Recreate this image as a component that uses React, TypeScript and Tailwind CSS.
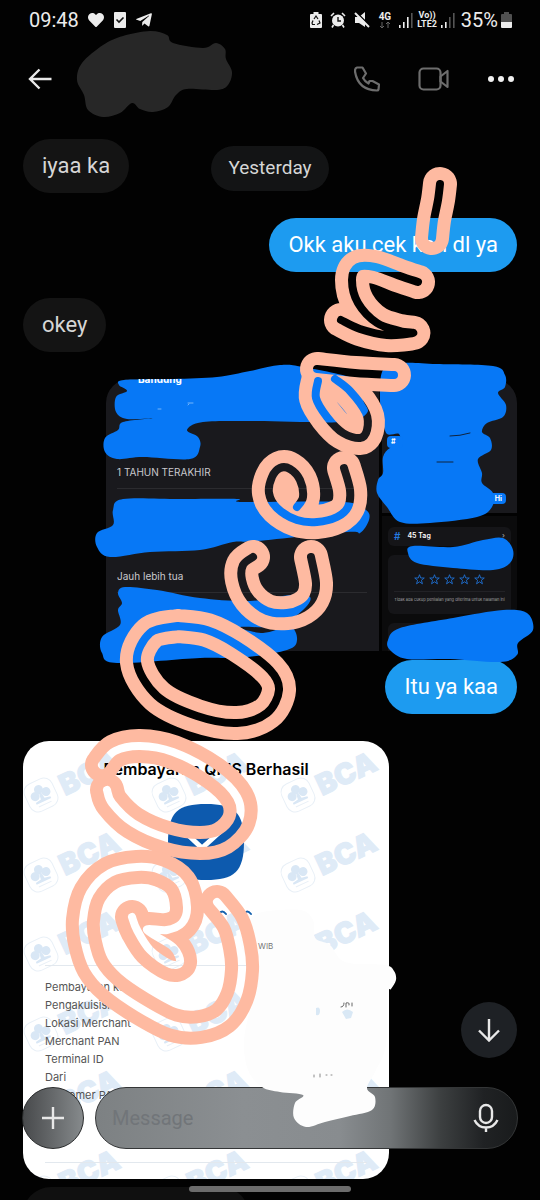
import type { ReactNode } from "react";
import { FaHeart, FaTelegramPlane } from "react-icons/fa";

type Point = [number, number];

// Catmull-Rom spline through the points, written as cubic curves
function smooth(src: string, closed = false) {
  const pts = src.split(" ").map((p) => p.split(",").map(Number) as Point);
  const n = pts.length;
  const at = (i: number) =>
    closed ? pts[(i + n) % n] : pts[Math.max(0, Math.min(n - 1, i))];
  let d = `M${pts[0][0]} ${pts[0][1]}`;
  for (let i = 0; i < (closed ? n : n - 1); i++) {
    const [a, b, c, e] = [at(i - 1), at(i), at(i + 1), at(i + 2)];
    d += `C${b[0] + (c[0] - a[0]) / 6} ${b[1] + (c[1] - a[1]) / 6} ${
      c[0] - (e[0] - b[0]) / 6
    } ${c[1] - (e[1] - b[1]) / 6} ${c[0]} ${c[1]}`;
  }
  return closed ? d + "Z" : d;
}

const BLUE_SCRIBBLES = [
  "119,385 124,380 173,379 217,377 250,371 280,365 303,367 357,380 363,400 367,413 343,422 257,421 203,422 187,430 198,437 200,447 190,459 143,457 117,459 105,452 105,438 118,430 123,422 153,418 127,419 116,412 116,397 127,391",
  "113,510 123,499 180,499 237,499 243,502 343,502 366,510 369,520 360,533 347,532 257,541 233,542 200,550 150,552 110,557 97,547 97,533 113,525",
  "118,593 125,587 157,590 200,598 250,601 290,595 310,597 303,610 277,626 240,627 263,633 290,627 297,640 287,650 240,658 200,658 117,663 102,653 102,637 120,625 118,610 122,603",
  "383,370 403,363 437,364 493,366 505,375 505,387 498,393 506,405 503,417 487,423 482,432 490,438 491,450 478,459 482,473 482,483 493,493 492,507 477,517 430,523 400,522 387,507 377,493 378,480 383,473 383,457 390,448 400,446 399,434 387,434 383,420 380,400",
  "408,553 413,546 453,547 483,540 503,538 513,550 510,563 493,570 453,568 417,563",
  "388,640 400,628 453,618 503,610 527,613 533,630 518,643 517,655 500,662 450,659 407,659 390,650",
];

const GREY_SCRIBBLE =
  "77,80 82,63 103,45 123,36 150,31 167,35 173,43 203,48 216,43 225,49 226,59 232,72 228,85 217,90 187,89 176,95 168,107 153,112 140,109 132,103 120,113 103,117 88,110 84,95";

const WHITE_SCRIBBLE =
  "262,912 300,910 313,920 315,938 330,945 345,962 385,965 394,971 396,980 391,989 387,994 386,1045 375,1072 367,1088 375,1097 372,1110 350,1116 325,1122 306,1127 294,1118 295,1103 303,1095 280,1092 262,1087 248,1070 244,1040 252,1000 256,970 245,955 240,935 250,920";

const MARKER_STROKES = [
  "440,184 438,200 434,220 432,238",
  "418,282 400,276 375,267 358,267 352,280 358,303 377,323 400,331 413,333 387,335 360,329 341,320",
  "317,369 355,373 394,375",
  "318,381 316,398 327,417 343,433 360,438 367,430 366,413 350,391 335,379",
  "297,507 303,497 300,480 290,469 280,468 272,477 269,493 277,508 297,520 317,522 337,517 348,507 350,490 344,468",
  "253,557 243,565 242,580 250,598 267,611 287,613 303,608 313,598 316,583 311,557",
  "178,626 150,633 137,662 157,696 197,716 237,723 267,713 279,690 270,670 237,645 207,630 178,626",
  "102,765 115,751 140,746 173,752 213,773 237,797 239,820 223,838 200,843 167,838 133,823 112,803 107,790",
  "132,917 137,930 150,950 170,964 180,962 173,947 147,930 167,930 182,923 187,907 180,883 160,870 137,867 110,873 90,893 83,920 85,943 93,967 110,987 140,1008 173,1025 200,1027 223,1018 237,997 242,970 240,947 233,923 217,902",
];

function Scribbles() {
  const strokes = MARKER_STROKES.map((s) => smooth(s));
  return (
    <svg
      className="pointer-events-none absolute inset-x-0 top-0 z-20 w-full"
      viewBox="0 0 540 1200"
      aria-hidden="true"
    >
      <defs>
        <mask id="hollow" maskUnits="userSpaceOnUse" x="0" y="0" width="540" height="1200">
          <rect width="540" height="1200" fill="white" />
          {strokes.map((d) => (
            <path key={d} d={d} fill="none" stroke="black" strokeWidth="8" strokeLinecap="round" strokeLinejoin="round" />
          ))}
        </mask>
      </defs>
      <path d={smooth(GREY_SCRIBBLE, true)} fill="#272727" />
      <g fill="#0778f6">
        {BLUE_SCRIBBLES.map((s) => (
          <path key={s} d={smooth(s, true)} />
        ))}
      </g>
      <path d={smooth(WHITE_SCRIBBLE, true)} fill="#fdfdfd" />
      <g fill="none" strokeLinecap="round">
        <path d="M450 436q10 0 20-3M437 462h16" stroke="#10243f" />
        <path d="M188 403h5M189 404l-1 1M158 409h3" stroke="#75b5fb" />
        <path d="M219 914q3-5 7 0M244 914q3-5 7 0" stroke="#1460ad" strokeWidth="2" />
        <path d="M341 1007q3 0 3-4M346 1007v-4q4-1 3 2M352 1003v3" stroke="#666" />
        <path d="M314 1075v2M320 1074v3M326 1075h1M331 1075h1" stroke="#888" />
      </g>
      <path d="M342 1012q5-5 11 0l-2 6-5 1zM316 1008q4-2 4 3t-4 4z" fill="#d9e8f5" />
      <g
        fill="none"
        stroke="#febaa1"
        strokeWidth="34"
        strokeLinecap="round"
        strokeLinejoin="round"
        mask="url(#hollow)"
      >
        {strokes.map((d) => (
          <path key={d} d={d} />
        ))}
      </g>
    </svg>
  );
}

function Signal({ active }: { active: number }) {
  return (
    <svg className="h-4 w-[14px]" viewBox="0 0 14 16" aria-hidden="true">
      {[3, 6, 11, 15].map((h, i) => (
        <rect key={h} x={i * 4} y={16 - h} width="1.6" height={h} fill={i < active ? "#eee" : "#555"} />
      ))}
    </svg>
  );
}

function StatusBar() {
  return (
    <div className="flex h-10 shrink-0 items-center justify-between pr-7 pl-[29px] text-[#ececec]">
      <div className="flex items-center gap-[9px]">
        <span className="text-[20px] leading-6">09:48</span>
        <FaHeart className="h-4 w-4" />
        <svg className="ml-px h-4 w-3" viewBox="0 0 12 16" aria-hidden="true">
          <rect width="12" height="16" rx="1" fill="currentColor" />
          <path d="M2.500 7.500l2.500 2.500 4.500-4.500" fill="none" stroke="#111" strokeWidth="1.600" />
        </svg>
        <FaTelegramPlane className="h-[18px] w-[18px]" />
      </div>
      <div className="flex items-center">
        <svg className="h-4 w-3" viewBox="0 0 12 16" aria-hidden="true">
          <path d="M3.500 0h5v2H11q1 0 1 1v12q0 1-1 1H1q-1 0-1-1V3q0-1 1-1h2.500z" fill="currentColor" />
          <path d="M4 7l2-3 2 3M9 8.500l1 2.500-3 1.500M5 12.500H2.500L2 11l1-2.500" fill="none" stroke="#111" strokeWidth="1.200" />
        </svg>
        <svg className="ml-2 h-4 w-4" viewBox="0 0 16 16" aria-hidden="true">
          <circle cx="8" cy="8.500" r="6" fill="currentColor" />
          <path d="M1 4l3-3M15 4l-3-3M3.500 13L2 15.500M12.500 13l1.500 2.500" stroke="currentColor" strokeWidth="1.600" />
          <path d="M8 5v4h3" fill="none" stroke="#111" strokeWidth="1.400" />
        </svg>
        <svg className="ml-2 h-4 w-4" viewBox="0 0 16 16" aria-hidden="true">
          <path d="M1 5h4l6-5v15L5 11H1z" fill="currentColor" />
          <path d="M2 0l14 14" stroke="#020202" strokeWidth="1.600" />
          <path d="M1 1l14 14" stroke="currentColor" strokeWidth="2" />
        </svg>
        <span className="ml-[9px] flex flex-col items-center text-[10px] leading-[9px] font-bold">
          4G
          <svg className="h-2 w-3" viewBox="0 0 12 8" fill="none" stroke="#666" aria-hidden="true">
            <path d="M3 1v6M1 5l2 2 2-2M9 7V1M7 3l2-2 2 2" />
          </svg>
        </span>
        <span className="ml-2 flex">
          <Signal active={3} />
        </span>
        <span className="ml-1 flex flex-col items-center text-[9px] leading-[9px] font-bold">
          <span>Vo))</span>
          <span>LTE2</span>
        </span>
        <span className="ml-1 flex">
          <Signal active={2} />
        </span>
        <span className="ml-[6px] text-[20px] leading-6">35%</span>
        <svg className="ml-[3px] h-4 w-[11px]" viewBox="0 0 11 16" aria-hidden="true">
          <path d="M3 0h5v2h2q1 0 1 1v7H0V3q0-1 1-1h2z" fill="#505050" />
          <path d="M0 10h11v5q0 1-1 1H1q-1 0-1-1z" fill="currentColor" />
        </svg>
      </div>
    </div>
  );
}

function Header() {
  return (
    <header className="flex h-[78px] shrink-0 items-center justify-between pr-[26px] pl-7">
      <button type="button" aria-label="Back" className="text-[#e8e8e8]">
        <svg className="h-6 w-6" viewBox="0 0 24 24" fill="none" stroke="currentColor" strokeWidth="2.400">
          <path d="M23.500 12H2M11.500 2.500L2 12l9.500 9.500" />
        </svg>
      </button>
      <div className="flex items-center text-[#6d6d6d]">
        <button type="button" aria-label="Call">
          <svg className="h-[26px] w-[26px]" viewBox="0 0 26 26" fill="none" stroke="currentColor" strokeWidth="2.200" strokeLinejoin="round">
            <path d="M3 1.500h5.500l3.500 6-3 4.500q2 3.800 5.500 5.500l1-2.500h3l6.500 3.500-.5 5q-.2 1-1.500 1Q4 24 1 5.500q-.2-3.500 2-4z" />
          </svg>
        </button>
        <button type="button" aria-label="Video call" className="ml-[38px]">
          <svg className="h-6 w-[31px]" viewBox="0 0 31 24" fill="none" stroke="currentColor" strokeWidth="2.200" strokeLinejoin="round">
            <rect x="1.500" y="1.500" width="21" height="21" rx="4" />
            <path d="M22.500 9.500l7-5.500v16l-7-5.500z" />
          </svg>
        </button>
        <button type="button" aria-label="More" className="ml-[39px] text-[#f0f0f0]">
          <svg className="h-6 w-[26px]" viewBox="0 0 26 24" fill="currentColor">
            <circle cx="3" cy="12" r="3" />
            <circle cx="13" cy="12" r="3" />
            <circle cx="23" cy="12" r="3" />
          </svg>
        </button>
      </div>
    </header>
  );
}

function Bubble({ mine, children }: { mine?: boolean; children: ReactNode }) {
  return (
    <p
      className={`flex h-[54px] w-fit items-center rounded-full px-[19px] text-[22px] leading-6 ${
        mine ? "ml-auto bg-[#1d9bf0] text-white" : "bg-[#141414] text-[#d6d6d6]"
      }`}
    >
      {children}
    </p>
  );
}

function MediaGrid() {
  return (
    <div className="mt-[27px] ml-auto grid h-[272px] w-[411px] shrink-0 grid-cols-[273px_1fr] gap-[3px] overflow-hidden rounded-t-3xl font-['Inter',sans-serif]">
      <div className="relative rounded-bl-lg bg-[#19191d] pt-[85px] pr-3 pl-[11px] text-[10px] leading-4 text-[#c9c9cd]">
        <p className="absolute -top-2 left-8 z-30 text-[10px] font-bold text-white">Bandung</p>
        <p className="border-b border-[#2b2b2f] pb-2">1 TAHUN TERAKHIR</p>
        <p className="mt-[79px] border-b border-[#2b2b2f] pb-2">Jauh lebih tua</p>
      </div>
      <div className="grid grid-rows-[134px_1fr] gap-[3px]">
        <div className="flex flex-col justify-between bg-[#19191d] pt-[57px] pr-[11px] pb-[9px] pl-[5px] text-[7px] font-bold text-white">
          <span className="relative z-30 w-4 rounded bg-[#0778f6] px-1 leading-3">#</span>
          <span className="ml-auto rounded bg-[#0778f6] pr-1 pl-8 leading-[11px]">ia Hi</span>
        </div>
        <div className="overflow-hidden bg-[#0b0b0c] px-[6px] pt-[11px]">
          <div className="flex h-[19px] items-center rounded-md bg-[#151518] px-[6px] text-[7px] font-semibold text-white">
            <span className="text-[10px] text-[#247be0]">#</span>
            <span className="ml-[7px]">45 Tag</span>
            <span className="ml-auto text-[#999]">›</span>
          </div>
          <div className="mt-[9px] h-[59px] rounded-md bg-[#151518] px-[6px] pt-[19px]">
            <div className="flex justify-center gap-1">
              {[1, 2, 3, 4, 5].map((n) => (
                <svg key={n} className="h-[11px] w-[11px]" viewBox="0 0 12 12" fill="none" stroke="#1f6fd0" aria-hidden="true">
                  <path d="M6 .8l1.300 3.500 3.900.1-3.100 2.400 1.100 3.900L6 8.500l-3.200 2.200 1.100-3.900L.8 4.400l3.900-.1z" />
                </svg>
              ))}
            </div>
            <p className="mt-[6px] border-t border-[#222226] pt-[5px] text-center text-[4px] leading-[5px] text-[#a0a0a0]">
              Tidak ada cukup penilaian yang diterima untuk halaman ini
            </p>
          </div>
          <div className="mt-[9px] h-10 rounded-md bg-[#151518]" />
        </div>
      </div>
    </div>
  );
}

function Watermark() {
  return (
    <svg className="absolute top-0 left-0 h-[438px] w-[365px]" viewBox="23 741 365 438" aria-hidden="true">
      <defs>
        <g id="stamp">
          <g transform="rotate(-25)" fill="none" stroke="#e9f0f7">
            <rect x="-15" y="-15" width="30" height="30" rx="9" />
            <g fill="#d9e7f5" stroke="none">
              <circle cx="0" cy="-6" r="4.500" />
              <circle cx="-6" cy="-1" r="4.500" />
              <circle cx="6" cy="-1" r="4.500" />
              <path d="M-1-3h2l1 7 6 1v2h-16v-2l6-1z" />
            </g>
            <path d="M-7 10h14" />
          </g>
          <text
            transform="translate(24 1) rotate(-25)"
            fontFamily="Inter, sans-serif"
            fontSize="29"
            fontWeight="900"
            fill="#dfebf7"
            stroke="#dfebf7"
            strokeWidth="1"
          >
            BCA
          </text>
        </g>
      </defs>
      {[795, 875, 954, 1034, 1113, 1193].map((y) =>
        [41, 169, 298].map((x) => <use key={`${x}-${y}`} href="#stamp" x={x} y={y} />)
      )}
    </svg>
  );
}

const RECEIPT_FIELDS = [
  "Pembayaran ke",
  "Pengakuisisi",
  "Lokasi Merchant",
  "Merchant PAN",
  "Terminal ID",
  "Dari",
  "Customer PAN",
];

function Receipt() {
  return (
    <article className="relative mt-[27px] h-[438px] w-[366px] shrink-0 overflow-hidden rounded-[26px] bg-white px-[22px] pt-[18px] font-['Inter',sans-serif]">
      <Watermark />
      <div className="relative">
        <h2 className="text-center text-[16px] leading-5 font-semibold text-black">Pembayaran QRIS Berhasil</h2>
        <svg className="mx-auto mt-[25px] h-[76px] w-[76px]" viewBox="0 0 76 76" aria-hidden="true">
          <path d="M38 0C66 0 76 8 76 38S66 76 38 76 0 68 0 38 10 0 38 0z" fill="#0d5aae" />
          <path d="M19 30l15 14 20-18" fill="none" stroke="white" strokeWidth="5" />
        </svg>
      </div>
      <p className="relative z-30 mt-[58px] ml-[213px] text-[8px] leading-4 text-[#777]">WIB</p>
      <div className="relative">
        <ul className="mt-[11px] border-t border-[#e2e8ee] pt-3 text-[11px] leading-[18px] text-[#555]">
          {RECEIPT_FIELDS.map((field) => (
            <li key={field}>{field}</li>
          ))}
        </ul>
        <hr className="mt-[58px] border-[#e2e8ee]" />
      </div>
    </article>
  );
}

function Composer() {
  return (
    <form className="absolute inset-x-0 bottom-[51px] z-10 flex gap-[11px] px-[22px]">
      <button
        type="button"
        aria-label="Add attachment"
        className="flex h-[62px] w-[62px] shrink-0 items-center justify-center rounded-full border border-[#292b2c] bg-linear-to-r from-[#484a4c] to-[#868a8c] text-[#e8e8e8]"
      >
        <svg className="h-6 w-6" viewBox="0 0 24 24" stroke="currentColor" strokeWidth="2.400">
          <path d="M12 1v22M1 12h22" />
        </svg>
      </button>
      <div className="flex h-[62px] grow items-center rounded-full border border-[#343637] bg-[linear-gradient(90deg,#7d8183_0%,#8b8f92_35%,#888c8f_58%,#707476_70%,#3c3f40_82%,#202224_92%,#191b1c_100%)] pr-[18px] pl-4">
        <input
          type="text"
          aria-label="Message"
          placeholder="Message"
          className="min-w-0 grow bg-transparent text-[20px] leading-6 text-white outline-none placeholder:text-[#717579]"
        />
        <button type="button" aria-label="Record voice message" className="text-[#e8e8e8]">
          <svg className="h-[30px] w-[26px]" viewBox="0 0 26 30" fill="none" stroke="currentColor" strokeWidth="2.400">
            <rect x="7" y="2" width="12" height="18" rx="6" />
            <path d="M1.500 17Q5 24.500 13 24.500T24.500 17M13 24v5" />
          </svg>
        </button>
      </div>
    </form>
  );
}

export default function App() {
  return (
    <div className="relative flex h-screen flex-col overflow-hidden bg-[#020202] font-['Roboto',sans-serif]">
      <StatusBar />
      <Header />
      <main className="flex min-h-0 grow flex-col px-[23px] pt-[21px]">
        <div className="grid grid-cols-[1fr_auto_1fr] items-center">
          <Bubble>iyaa ka</Bubble>
          <time className="mt-1 flex h-[45px] items-center rounded-full bg-[#131415] px-[17px] text-[19px] leading-6 text-[#d6d6d6]">
            Yesterday
          </time>
        </div>
        <div className="mt-[25px]">
          <Bubble mine>Okk aku cek kan dl ya</Bubble>
        </div>
        <div className="mt-[26px]">
          <Bubble>okey</Bubble>
        </div>
        <MediaGrid />
        <div className="mt-[9px]">
          <Bubble mine>Itu ya kaa</Bubble>
        </div>
        <Receipt />
        <div className="mt-2 h-14 w-[226px] shrink-0 rounded-full bg-[#101010]" />
      </main>
      <button
        type="button"
        aria-label="Scroll to latest"
        className="absolute right-[23px] bottom-[142px] z-10 flex h-14 w-14 items-center justify-center rounded-full bg-[#1e2125] text-[#e8e8e8]"
      >
        <svg className="h-6 w-6" viewBox="0 0 24 24" fill="none" stroke="currentColor" strokeWidth="2.400">
          <path d="M12 1v21M2 12.500l10 10 10-10" />
        </svg>
      </button>
      <Composer />
      <div className="absolute bottom-2 left-1/2 z-10 h-[6px] w-[162px] -translate-x-1/2 rounded-full bg-[#6c6c6c]" />
      <Scribbles />
    </div>
  );
}
